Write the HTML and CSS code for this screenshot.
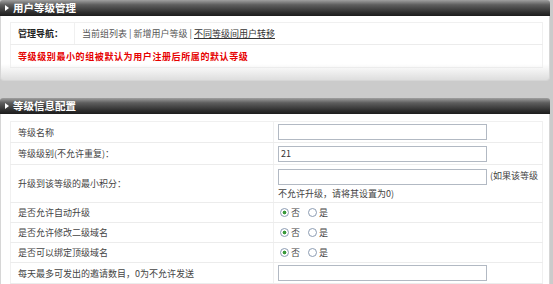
FILE: index.html
```
<!DOCTYPE html>
<html lang="zh-CN">
<head>
    <meta charset="UTF-8">
    <title>用户等级管理</title>
    <link rel="stylesheet" href="styles.css">
</head>
<body>
    <div class="panel">
        <div class="panel-head"><span class="arrow"></span>用户等级管理</div>
        <div class="panel-body panel-body-short">
            <table class="grid">
                <tr class="nav-row">
                    <th class="nav-label">管理导航：</th>
                    <td class="nav-links">
                        <a href="#">当前组列表</a> | <a href="#">新增用户等级</a> | <a href="#" class="current">不同等级间用户转移</a>
                    </td>
                </tr>
                <tr class="notice-row">
                    <td colspan="2" class="notice">等级级别最小的组被默认为用户注册后所属的默认等级</td>
                </tr>
            </table>
        </div>
    </div>

    <div class="panel">
        <div class="panel-head"><span class="arrow"></span>等级信息配置</div>
        <div class="panel-body">
            <table class="grid form-table">
                <tr class="row-input">
                    <td class="label">等级名称</td>
                    <td class="field"><input type="text" class="text"></td>
                </tr>
                <tr class="row-input tall">
                    <td class="label">等级级别(不允许重复)：</td>
                    <td class="field"><input type="text" class="text" value="21"></td>
                </tr>
                <tr class="row-wrap">
                    <td class="label">升级到该等级的最小积分：</td>
                    <td class="field"><input type="text" class="text">(如果该等级不允许升级，请将其设置为0)</td>
                </tr>
                <tr class="row-radio">
                    <td class="label">是否允许自动升级</td>
                    <td class="field">
                        <label><input type="radio" name="auto" checked>否</label>
                        <label><input type="radio" name="auto">是</label>
                    </td>
                </tr>
                <tr class="row-radio">
                    <td class="label">是否允许修改二级域名</td>
                    <td class="field">
                        <label><input type="radio" name="sub" checked>否</label>
                        <label><input type="radio" name="sub">是</label>
                    </td>
                </tr>
                <tr class="row-radio">
                    <td class="label">是否可以绑定顶级域名</td>
                    <td class="field">
                        <label><input type="radio" name="top" checked>否</label>
                        <label><input type="radio" name="top">是</label>
                    </td>
                </tr>
                <tr class="row-input">
                    <td class="label">每天最多可发出的邀请数目，0为不允许发送</td>
                    <td class="field"><input type="text" class="text"></td>
                </tr>
            </table>
        </div>
    </div>
</body>
</html>
```

FILE: styles.css
```
body {
    margin: 0;
    background: #cbcbcb;
    font-family: "Noto Sans CJK SC", sans-serif;
    font-size: 9px;
    color: #444;
}
.panel {
    width: 550px;
    margin-bottom: 17px;
}
.panel-head {
    height: 16px;
    line-height: 16px;
    padding-left: 5px;
    background: linear-gradient(#a0a0a0, #5e5e5e 30%, #2c2c2c 80%, #1c1c1c);
    color: #fff;
    font-weight: bold;
    font-size: 10.5px;
    border-radius: 3px 3px 0 0;
}
.arrow {
    display: inline-block;
    width: 0;
    height: 0;
    border-top: 3px solid transparent;
    border-bottom: 3px solid transparent;
    border-left: 4px solid #fff;
    margin-right: 4px;
    vertical-align: 1px;
}
.panel-body {
    background: #fff;
    border: 1px solid #d6d6d6;
    border-top: none;
    padding: 7px 6px 0 9px;
}
.panel-body-short {
    padding: 6px 6px 12px 9px;
    border-radius: 0 0 4px 4px;
    background: linear-gradient(#fff calc(100% - 16px), #dedede);
}
.grid {
    width: 533px;
    border-collapse: collapse;
    border: 1px solid #f0f0f0;
}
.grid td, .grid th {
    border-bottom: 1px solid #ececec;
    padding: 0 0 0 7px;
    text-align: left;
    vertical-align: middle;
}
.nav-row {
    height: 22px;
}
.nav-label {
    width: 56px;
    font-weight: bold;
    color: #222;
    border-right: 1px solid #f0f0f0;
}
.nav-links {
    color: #555;
}
.nav-links a {
    color: #555;
    text-decoration: none;
}
.nav-links a.current {
    color: #333;
    text-decoration: underline;
}
.notice-row {
    height: 23px;
}
.notice {
    color: #e60000;
    font-weight: bold;
    letter-spacing: 0.6px;
}
.form-table .label {
    width: 255px;
    border-right: 1px solid #f0f0f0;
}
.form-table .field {
    padding-left: 4px;
    color: #444;
}
.row-input {
    height: 21px;
}
.row-input.tall {
    height: 22px;
}
.row-wrap {
    height: 38px;
}
.row-wrap .field {
    padding-top: 2px;
    line-height: 17px;
}
.row-radio {
    height: 20px;
}
.text {
    width: 203px;
    height: 14px;
    padding: 0 2px;
    margin: 0 3px 0 0;
    border: 1px solid #b2b9c3;
    font-family: "Noto Sans CJK SC", sans-serif;
    font-size: 9px;
    color: #333;
    vertical-align: middle;
    box-sizing: content-box;
}
.field label {
    margin-right: 4px;
}
input[type="radio"] {
    appearance: none;
    box-sizing: border-box;
    width: 9px;
    height: 9px;
    margin: 0 2px 0 2px;
    border: 1px solid #8c9cb2;
    border-radius: 50%;
    background: #fff;
    vertical-align: -1px;
}
input[type="radio"]:checked {
    background: radial-gradient(circle, #3a9a3a 1.6px, #fff 2.2px);
}
```
